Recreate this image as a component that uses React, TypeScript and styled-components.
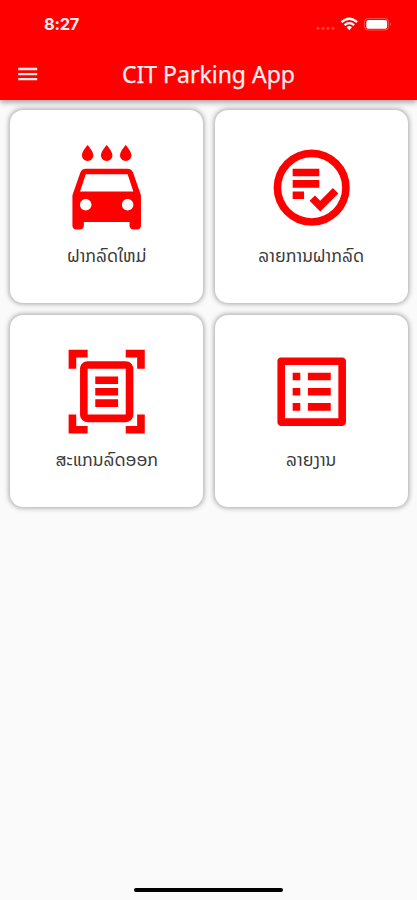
import React from 'react';
import styled, { createGlobalStyle } from 'styled-components';

const GlobalStyle = createGlobalStyle`
  * { box-sizing: border-box; }
  body { margin: 0; background: #fafafa; }
`;

const Screen = styled.div`
  width: 417px;
  height: 900px;
  display: flex;
  flex-direction: column;
  overflow: hidden;
  background: #fafafa;
  font-family: 'Noto Sans', 'DejaVu Sans', sans-serif;
`;

const Header = styled.header`
  height: 100.4px;
  flex: none;
  background: #ff0000;
  color: #fff;
  box-shadow: 0 2px 6px rgba(0, 0, 0, 0.4);
  z-index: 1;
`;

const StatusBar = styled.div`
  height: 48px;
  padding: 0 26px 0 44px;
  display: flex;
  align-items: center;
  justify-content: space-between;
`;

const Clock = styled.span`
  font: 700 16.5px/20px Inter, sans-serif;
  letter-spacing: -0.3px;
  color: #ffe9e9;
`;

const StatusIcons = styled.svg`
  width: 76px;
  height: 16px;
  display: block;
`;

const AppBar = styled.div`
  height: 51px;
  display: grid;
  grid-template-columns: 56px 1fr 56px;
  align-items: center;
`;

const MenuButton = styled.button`
  height: 48px;
  padding: 0 0 0 18px;
  border: 0;
  background: none;
  display: flex;
  align-items: center;
`;

const MenuIcon = styled.svg`
  width: 20px;
  height: 14px;
`;

const Title = styled.h1`
  margin: 0;
  font-size: 23px;
  line-height: 32px;
  font-weight: 400;
  letter-spacing: 0;
  -webkit-text-stroke: 0.25px #fff0f0;
  text-align: center;
  white-space: nowrap;
  color: #fff0f0;
`;

const Menu = styled.main`
  flex: 1;
  display: grid;
  grid-template-columns: 192.7px 192.7px;
  grid-auto-rows: 192.7px;
  align-content: start;
  gap: 11.8px;
  padding: 9.8px 0 0 10.4px;
`;

const Card = styled.section`
  display: flex;
  flex-direction: column;
  align-items: center;
  padding-top: 31.4px;
  border-radius: 13px;
  background: #fff;
  box-shadow: 0 0 5px 0.5px rgba(0, 0, 0, 0.34);
`;

const CardIcon = styled.svg`
  width: 91.4px;
  height: 91.4px;
  flex: none;
  fill: #ff0000;
`;

const Label = styled.span`
  margin-top: 9px;
  font: 400 17.5px/28px 'Noto Sans Lao', 'DejaVu Sans', sans-serif;
  white-space: nowrap;
  color: #3a3a3a;
`;

const HomeArea = styled.footer`
  height: 22px;
  display: flex;
  justify-content: center;
  padding-top: 10px;
`;

const HomeIndicator = styled.div`
  width: 149px;
  height: 4px;
  border-radius: 2px;
  background: #000;
`;

const items = [
  {
    label: 'ຝາກລົດໃຫມ່',
    path: 'M17 5c.83 0 1.5-.67 1.5-1.5 0-1-1.5-2.7-1.5-2.7s-1.5 1.7-1.5 2.7c0 .83.67 1.5 1.5 1.5zm-5 0c.83 0 1.5-.67 1.5-1.5 0-1-1.5-2.7-1.5-2.7s-1.5 1.7-1.5 2.7c0 .83.67 1.5 1.5 1.5zM7 5c.83 0 1.5-.67 1.5-1.5C8.5 2.5 7 .8 7 .8S5.5 2.5 5.5 3.5C5.5 4.33 6.17 5 7 5zm11.92 3.01C18.72 7.42 18.16 7 17.5 7h-11c-.66 0-1.21.42-1.42 1.01L3 14v8c0 .55.45 1 1 1h1c.55 0 1-.45 1-1v-1h12v1c0 .55.45 1 1 1h1c.55 0 1-.45 1-1v-8l-2.08-5.99zM6.5 18c-.83 0-1.5-.67-1.5-1.5S5.67 15 6.5 15s1.5.67 1.5 1.5S7.33 18 6.5 18zm11 0c-.83 0-1.5-.67-1.5-1.5s.67-1.5 1.5-1.5 1.5.67 1.5 1.5-.67 1.5-1.5 1.5zM5 13l1.5-4.5h11L19 13H5z',
  },
  {
    label: 'ລາຍການຝາກລົດ',
    path: 'M12 2a10 10 0 1 0 0 20a10 10 0 1 0 0-20zm0 18a8 8 0 1 1 0-16a8 8 0 1 1 0 16zM7 7h7v2H7zM7 10h7v2H7zM7 13h3v2H7zM17.57 12.1L19 13.5L14.24 18.24L11.44 15.43L12.86 14.02L14.24 15.42z',
  },
  {
    label: 'ສະແກນລົດອອກ',
    path: 'M7 3H4v3H2V1h5v2zm15 3V1h-5v2h3v3h2zM7 21H4v-3H2v5h5v-2zm13-3v3h-3v2h5v-5h-2zM19 18c0 1.1-.9 2-2 2H7c-1.1 0-2-.9-2-2V6c0-1.1.9-2 2-2h10c1.1 0 2 .9 2 2v12zM17 6H7v12h10V6zM9 8h6v2H9zM9 11h6v2H9zM9 14h6v2H9z',
  },
  {
    label: 'ລາຍງານ',
    path: 'M19 5v14H5V5h14m1.1-2H3.9c-.5 0-.9.4-.9.9v16.2c0 .4.4.9.9.9h16.2c.4 0 .9-.5.9-.9V3.9c0-.5-.5-.9-.9-.9zM11 7h6v2h-6zM11 11h6v2h-6zM11 15h6v2h-6zM7 7h2v2H7zM7 11h2v2H7zM7 15h2v2H7z',
  },
];

export default function App() {
  return (
    <Screen>
      <GlobalStyle />
      <Header>
        <StatusBar>
          <Clock>8:27</Clock>
          <StatusIcons viewBox="0 0 76 16">
            <g fill="#fff" opacity=".25">
              <circle cx="3" cy="12.3" r="1.5" />
              <circle cx="8" cy="12.3" r="1.5" />
              <circle cx="13" cy="12.3" r="1.5" />
              <circle cx="18" cy="12.3" r="1.5" />
            </g>
            <g fill="none" stroke="#fff" strokeWidth="2.3">
              <path d="M26.5 6.2Q34.3-.8 42.1 6.2" />
              <path d="M29.5 9.2Q34.3 5 39.1 9.2" />
            </g>
            <path d="M31.6 11.2Q34.3 9 37 11.2L34.3 14.3z" fill="#fff" />
            <rect x="49.5" y="2.5" width="24" height="11.5" rx="3.5" fill="none" stroke="#fff" opacity=".3" />
            <rect x="51.3" y="4" width="20.8" height="8.8" rx="1.8" fill="#fff" />
            <path d="M75 6.3q1.2 1.8 0 3.8z" fill="#fff" opacity=".5" />
          </StatusIcons>
        </StatusBar>
        <AppBar>
          <MenuButton aria-label="Menu">
            <MenuIcon viewBox="0 0 20 14">
              <path d="M.2 2h19M.2 7.1h19M.2 12.2h19" stroke="#ffe4e4" strokeWidth="2.3" />
            </MenuIcon>
          </MenuButton>
          <Title>CIT Parking App</Title>
        </AppBar>
      </Header>
      <Menu>
        {items.map((item) => (
          <Card key={item.label}>
            <CardIcon viewBox="0 0 24 24">
              <path d={item.path} fillRule="evenodd" />
            </CardIcon>
            <Label>{item.label}</Label>
          </Card>
        ))}
      </Menu>
      <HomeArea>
        <HomeIndicator />
      </HomeArea>
    </Screen>
  );
}
